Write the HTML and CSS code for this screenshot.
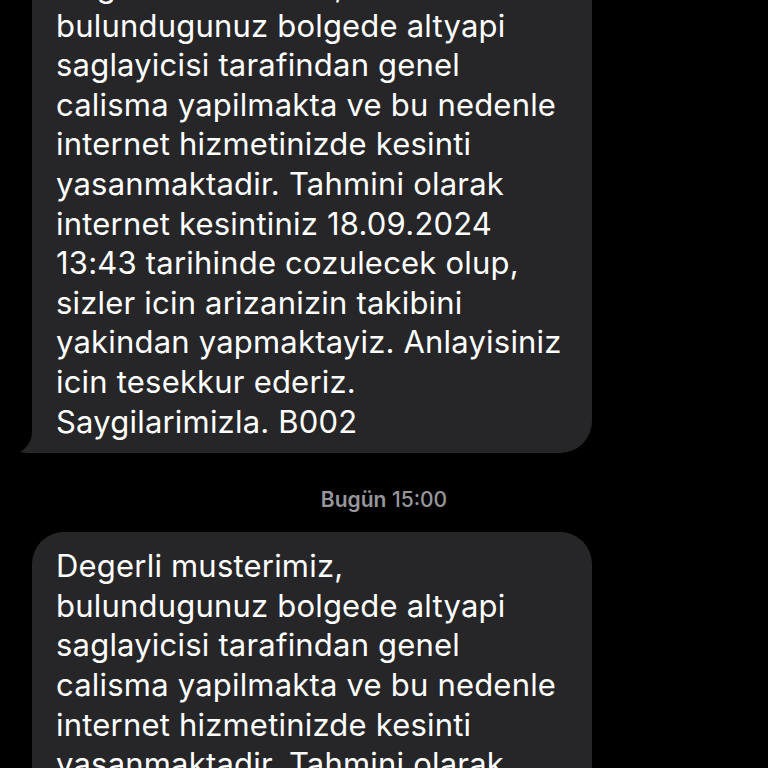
FILE: index.html
```html
<!DOCTYPE html>
<html lang="tr">
<head>
    <meta charset="UTF-8">
    <meta name="viewport" content="width=device-width, initial-scale=1.0">
    <title>Mesajlar</title>
    <link rel="stylesheet" href="styles.css">
</head>
<body>
    <div class="thread">
        <div class="bubble bubble-first">
            <p class="bubble-text">Degerli musterimiz,<br>bulundugunuz bolgede altyapi<br>saglayicisi tarafindan genel<br>calisma yapilmakta ve bu nedenle<br>internet hizmetinizde kesinti<br>yasanmaktadir. Tahmini olarak<br>internet kesintiniz 18.09.2024<br>13:43 tarihinde cozulecek olup,<br>sizler icin arizanizin takibini<br>yakindan yapmaktayiz. Anlayisiniz<br>icin tesekkur ederiz.<br>Saygilarimizla. B002</p>
            <svg class="bubble-tail" viewBox="0 0 24 22" width="24" height="22">
                <path d="M12 0 C12 9 8 16 0 21 C4 22 9 22 12 22 L24 22 L24 0 Z"/>
            </svg>
        </div>

        <div class="timestamp"><span class="timestamp-day">Bugün</span> 15:00</div>

        <div class="bubble">
            <p class="bubble-text">Degerli musterimiz,<br>bulundugunuz bolgede altyapi<br>saglayicisi tarafindan genel<br>calisma yapilmakta ve bu nedenle<br>internet hizmetinizde kesinti<br>yasanmaktadir. Tahmini olarak<br>internet kesintiniz 18.09.2024<br>13:43 tarihinde cozulecek olup,<br>sizler icin arizanizin takibini<br>yakindan yapmaktayiz. Anlayisiniz<br>icin tesekkur ederiz.<br>Saygilarimizla. B002</p>
        </div>
    </div>
</body>
</html>
```

FILE: styles.css
```css
/* CSS */
* {
    margin: 0;
    padding: 0;
    box-sizing: border-box;
}

:root {
    --black: #000;
    --bubble-gray: #262628;
    --text-white: #fff;
    --meta-gray: #96969b;
}

html, body {
    height: 100%;
    overflow: hidden;
    background-color: var(--black);
}

body {
    font-family: Inter, "Noto Sans", sans-serif;
}

.thread {
    display: flex;
    flex-direction: column;
    padding-left: 32px;
}

.bubble {
    position: relative;
    width: 560px;
    padding: 14px 24px 12px 24px;
    border-radius: 32px;
    background-color: var(--bubble-gray);
}

.bubble-first {
    margin-top: -48px;
    border-bottom-left-radius: 0;
}

.bubble-text {
    font-size: 31px;
    line-height: 39.6px;
    letter-spacing: 0.2px;
    color: var(--text-white);
    white-space: nowrap;
}

.bubble-tail {
    position: absolute;
    left: -12px;
    bottom: 0;
    fill: var(--bubble-gray);
}

.timestamp {
    margin: 34px 0 20px -32px;
    font-size: 21px;
    line-height: 25px;
    font-weight: 500;
    text-align: center;
    color: var(--meta-gray);
}

.timestamp-day {
    font-weight: 600;
}
```
